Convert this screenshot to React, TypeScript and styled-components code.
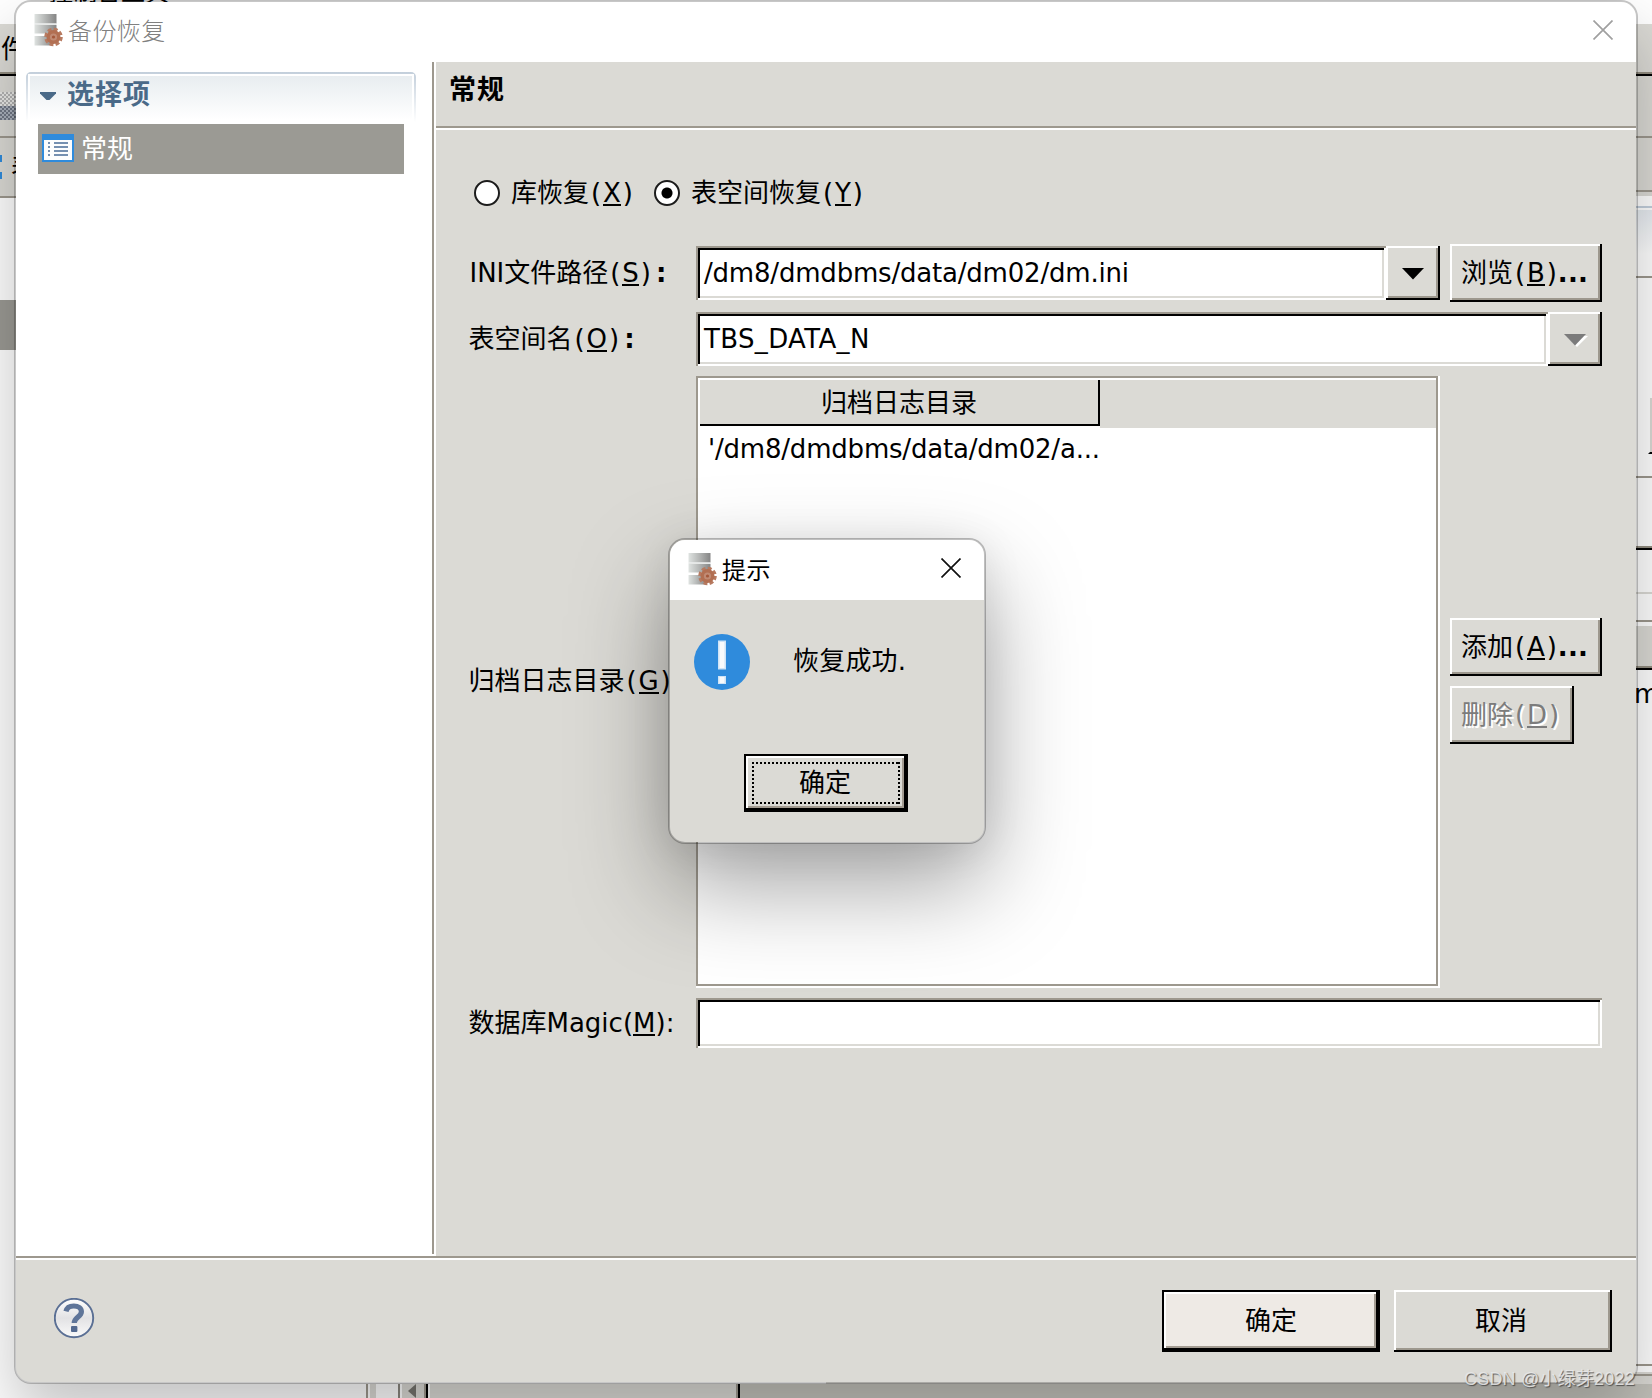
import React from 'react';
import styled, { createGlobalStyle } from 'styled-components';

interface Band {
    height: number;
    color: string;
}

/* 뒤쪽 창의 왼쪽 / 오른쪽 줄무늬 영역 */
const LeftBands: Band[] = [
    { height: 2, color: '#928d80' },
    { height: 2, color: '#000000' },
    { height: 60, color: '#dbdad5' },
    { height: 2, color: '#9d988e' },
    { height: 58, color: '#dbdad5' },
    { height: 2, color: '#9d988e' },
    { height: 102, color: '#ffffff' },
    { height: 50, color: '#9b9a94' },
    { height: 1034, color: '#ffffff' },
];

const RightBands: Band[] = [
    { height: 2, color: '#928d80' },
    { height: 2, color: '#000000' },
    { height: 60, color: '#dbdad5' },
    { height: 2, color: '#9d988e' },
    { height: 52, color: '#dbdad5' },
    { height: 2, color: '#9d988e' },
    { height: 4, color: '#dbdad5' },
    { height: 10, color: '#ffffff' },
    { height: 2, color: '#c3cfdc' },
    { height: 2, color: '#ffffff' },
    { height: 44, color: 'linear-gradient(#e6ebf0, #ffffff)' },
    { height: 22, color: '#ffffff' },
    { height: 2, color: '#9d988e' },
    { height: 198, color: '#ffffff' },
    { height: 2, color: '#9d988e' },
    { height: 68, color: '#ffffff' },
    { height: 2, color: '#928d80' },
    { height: 2, color: '#000000' },
    { height: 42, color: '#ffffff' },
    { height: 2, color: '#dbdad5' },
    { height: 26, color: '#ffffff' },
    { height: 2, color: '#9d988e' },
    { height: 4, color: '#ffffff' },
    { height: 40, color: '#dbdad5' },
    { height: 2, color: '#928d80' },
    { height: 2, color: '#000000' },
    { height: 694, color: '#ffffff' },
    { height: 2, color: '#9d988e' },
    { height: 6, color: '#ffffff' },
    { height: 2, color: '#dbdad5' },
    { height: 2, color: '#9d988e' },
    { height: 8, color: '#dbdad5' },
];

const BottomCells = [
    { width: 366, color: '#ffffff' },
    { width: 2, color: '#9d988e' },
    { width: 2, color: '#ffffff' },
    { width: 6, color: '#dbdad5' },
    { width: 22, color: '#ffffff' },
    { width: 2, color: '#8a877f' },
    { width: 2, color: '#ffffff' },
    { width: 22, color: '#dbdad5' },
    { width: 2, color: '#9d988e' },
    { width: 2, color: '#000000' },
    { width: 2, color: '#ffffff' },
    { width: 306, color: '#dbdad5' },
    { width: 2, color: '#9d988e' },
    { width: 2, color: '#000000' },
    { width: 912, color: '#c2c1ba' },
];

const ServerIcon = () => (
    <svg width="30" height="34" viewBox="0 0 30 34">
        <defs>
            <linearGradient id="disk" x1="0" y1="0" x2="1" y2="0">
                <stop offset="0" stopColor="#dfe3e1" />
                <stop offset="0.5" stopColor="#b3b5b4" />
                <stop offset="1" stopColor="#858585" />
            </linearGradient>
        </defs>
        <rect x="0.5" y="1" width="22" height="9.5" fill="url(#disk)" />
        <rect x="0.5" y="10.5" width="22" height="1.5" fill="#e6e8e7" />
        <rect x="0.5" y="12" width="22" height="8.5" fill="url(#disk)" />
        <rect x="0.5" y="23" width="18" height="9.5" fill="url(#disk)" />
        <circle
            cx="19.5"
            cy="24"
            r="7.6"
            fill="none"
            stroke="#b77a60"
            strokeWidth="3.4"
            strokeDasharray="3.8 2.17"
        />
        <circle cx="19.5" cy="24" r="7" fill="#b26f52" />
        <circle cx="19.5" cy="24" r="3.6" fill="#c08b74" />
        <circle cx="19.5" cy="24" r="1.6" fill="#a4583a" />
    </svg>
);

const CloseIcon = ({ color }: { color: string }) => (
    <svg width="20" height="20" viewBox="0 0 20 20">
        <path d="M0.5 0.5L19.5 19.5M19.5 0.5L0.5 19.5" stroke={color} strokeWidth="1.7" />
    </svg>
);

const ListIcon = () => (
    <svg width="32" height="28" viewBox="0 0 32 28" shapeRendering="crispEdges">
        <rect width="32" height="28" fill="#2f8bdc" />
        <rect x="2" y="6" width="28" height="20" fill="#fdfdfd" />
        <path
            d="M6 9h2M6 13h2M6 17h2M6 21h2M12 9h14M12 13h14M12 17h14M12 21h14"
            stroke="#7690b0"
            strokeWidth="2"
        />
    </svg>
);

const InfoIcon = () => (
    <svg width="56" height="56" viewBox="0 0 56 56">
        <circle cx="28" cy="28" r="28" fill="#2f8bdc" />
        <rect x="24" y="6.5" width="8" height="29" fill="#cfe3f6" />
        <rect x="25.5" y="8" width="5" height="26" fill="#f8fafc" />
        <rect x="24" y="42" width="8" height="8" fill="#cfe3f6" />
        <rect x="25.5" y="43" width="5" height="6" fill="#f8fafc" />
    </svg>
);

const HelpIcon = () => (
    <svg width="42" height="42" viewBox="0 0 42 42">
        <defs>
            <linearGradient id="help" x1="0" y1="0" x2="0" y2="1">
                <stop offset="0" stopColor="#ffffff" />
                <stop offset="0.5" stopColor="#e2e2e4" />
                <stop offset="1" stopColor="#fafafa" />
            </linearGradient>
        </defs>
        <circle cx="20" cy="20" r="19.2" fill="url(#help)" stroke="#5a6f94" strokeWidth="1.9" />
        <path
            d="M12 13.4C12.8 9.6 15.8 8 19.8 8c4.6 0 7.6 2.2 7.6 5.7 0 5.1-7.2 5.7-7.2 11.4"
            fill="none"
            stroke="#5f7599"
            strokeWidth="5.2"
        />
        <rect x="17" y="28" width="6.4" height="6" rx="1" fill="#53698f" />
    </svg>
);

const Arrow = ({ disabled }: { disabled?: boolean }) => (
    <svg width="26" height="16" viewBox="0 0 26 16">
        {disabled && <path d="M4 5h22L15 16z" fill="#ffffff" />}
        <path d="M2 3h22L13 14.5z" fill={disabled ? '#7b7b7b' : '#000000'} />
    </svg>
);

/* 단축키 표시 (X) */
const Key = ({ char }: { char: string }) => (
    <>
        <Half>(</Half>
        <Mnemonic>{char}</Mnemonic>
        <Half>)</Half>
    </>
);

const App = () => {
    return (
        <>
            <GlobalStyle />
            <Desktop>
                <BackTop>
                    <BackTitle>控制台工具</BackTitle>
                </BackTop>
                <BackMenu>件</BackMenu>
                <BackColumns>
                    <BackColumn>
                        {LeftBands.map((band, i) => (
                            <BandBox key={i} $height={band.height} $color={band.color} />
                        ))}
                    </BackColumn>
                    <BackColumn>
                        {RightBands.map((band, i) => (
                            <BandBox key={i} $height={band.height} $color={band.color} />
                        ))}
                    </BackColumn>
                </BackColumns>
                <BackBottom>
                    {BottomCells.map((cell, i) => (
                        <BottomCell key={i} $width={cell.width} $color={cell.color}>
                            {i === 7 && (
                                <svg width="10" height="14" viewBox="0 0 10 14">
                                    <path d="M8 0v14L0 7z" fill="#77756f" />
                                </svg>
                            )}
                        </BottomCell>
                    ))}
                </BackBottom>
                <ToolImage />
                <ToolDots />
                <ToolText>表</ToolText>
                <SideButton />
                <SideText>m</SideText>

                <Dialog>
                    <TitleBar>
                        <ServerIcon />
                        <TitleText $muted>备份恢复</TitleText>
                        <CloseIcon color="#a0a0a0" />
                    </TitleBar>
                    <Body>
                        <Sidebar>
                            <SectionHeader>
                                <svg width="16" height="9" viewBox="0 0 16 9">
                                    <path d="M0 0h16v1.6L9.5 8h-3L0 1.6z" fill="#4a6a88" />
                                </svg>
                                <SectionTitle>选择项</SectionTitle>
                            </SectionHeader>
                            <SideItem>
                                <ListIcon />
                                <SideText2>常规</SideText2>
                            </SideItem>
                        </Sidebar>
                        <Pane>
                            <PaneHeader>常规</PaneHeader>
                            <Form>
                                <RadioRow>
                                    <Radio />
                                    <RadioLabel $width={143}>
                                        库恢复
                                        <Key char="X" />
                                    </RadioLabel>
                                    <Radio $checked />
                                    <RadioLabel>
                                        表空间恢复
                                        <Key char="Y" />
                                    </RadioLabel>
                                </RadioRow>
                                <Row $height={58}>
                                    <Label $indent={1}>
                                        INI文件路径
                                        <Key char="S" />
                                        <Colon>:</Colon>
                                    </Label>
                                    <Combo>
                                        <Field $spacing={-0.2}>/dm8/dmdbms/data/dm02/dm.ini</Field>
                                        <DropButton>
                                            <Arrow />
                                        </DropButton>
                                    </Combo>
                                    <Button $width={152}>
                                        浏览
                                        <Key char="B" />
                                        <Dots>...</Dots>
                                    </Button>
                                </Row>
                                <Row $height={54}>
                                    <Label>
                                        表空间名
                                        <Key char="O" />
                                        <Colon>:</Colon>
                                    </Label>
                                    <Combo>
                                        <Field $spacing={0.35}>TBS_DATA_N</Field>
                                        <DropButton>
                                            <Arrow disabled />
                                        </DropButton>
                                    </Combo>
                                </Row>
                                <Row $height={612}>
                                    <Label $raise={2}>
                                        归档日志目录
                                        <Key char="G" />
                                    </Label>
                                    <Table>
                                        <TableHeader>
                                            <HeaderCell>归档日志目录</HeaderCell>
                                        </TableHeader>
                                        <TableRow>'/dm8/dmdbms/data/dm02/a...</TableRow>
                                    </Table>
                                    <ButtonColumn>
                                        <Button $width={152}>
                                            添加
                                            <Key char="A" />
                                            <Dots>...</Dots>
                                        </Button>
                                        <Button $width={124} $disabled>
                                            删除
                                            <Key char="D" />
                                        </Button>
                                    </ButtonColumn>
                                </Row>
                                <Row $height={50}>
                                    <Label>
                                        数据库Magic(<Mnemonic>M</Mnemonic>):
                                    </Label>
                                    <Field />
                                </Row>
                            </Form>
                        </Pane>
                    </Body>
                    <Footer>
                        <HelpIcon />
                        <FooterButtons>
                            <DefaultButton $width={218} $height={62} $color="#eeeae5">
                                确定
                            </DefaultButton>
                            <CancelButton $width={218}>取消</CancelButton>
                        </FooterButtons>
                    </Footer>
                </Dialog>

                <Popup>
                    <PopupTitleBar>
                        <ServerIcon />
                        <TitleText>提示</TitleText>
                        <CloseIcon color="#111111" />
                    </PopupTitleBar>
                    <PopupMessage>
                        <InfoIcon />
                        <MessageText>恢复成功.</MessageText>
                    </PopupMessage>
                    <PopupButtons>
                        <DefaultButton $width={164} $height={58} $color="#dbdad5">
                            <FocusRing>确定</FocusRing>
                        </DefaultButton>
                    </PopupButtons>
                </Popup>

                <Watermark>CSDN @小绿芽2022</Watermark>
            </Desktop>
        </>
    );
};

export default App;

const GlobalStyle = createGlobalStyle`
    * {
        box-sizing: border-box;
    }
    body {
        margin: 0;
        overflow: hidden;
    }
    svg {
        display: block;
        flex: none;
    }
`;

/* 바탕 화면 */
const Desktop = styled.div`
    position: relative;
    width: 1652px;
    height: 1398px;
    overflow: hidden;
    background: #ffffff;
    color: #000000;
    font-family: 'DejaVu Sans', 'Noto Sans CJK SC', sans-serif;
    font-size: 26px;
    line-height: 30px;
    white-space: nowrap;
`;

const BackTop = styled.div`
    height: 24px;
    padding-left: 49px;
    overflow: hidden;
`;

const BackTitle = styled.div`
    margin-top: -24px;
    font-family: 'Noto Sans CJK SC', sans-serif;
    font-size: 24px;
    line-height: 30px;
`;

const BackMenu = styled.div`
    height: 48px;
    padding: 10px 0 0 1px;
    background: #dbdad5;
`;

const BackColumns = styled.div`
    display: grid;
    grid-template-columns: 1fr 1fr;
    height: 1312px;
`;

const BackColumn = styled.div`
    display: flex;
    flex-direction: column;
    overflow: hidden;
`;

const BandBox = styled.div<{ $height: number; $color: string }>`
    flex: none;
    height: ${({ $height }) => $height}px;
    background: ${({ $color }) => $color};
`;

const BackBottom = styled.div`
    display: flex;
    height: 14px;
`;

const BottomCell = styled.div<{ $width: number; $color: string }>`
    display: flex;
    align-items: center;
    justify-content: center;
    flex: none;
    width: ${({ $width }) => $width}px;
    background: ${({ $color }) => $color};
`;

/* 대화상자에 가려진 툴바 조각 */
const ToolImage = styled.div`
    position: absolute;
    left: 0;
    top: 92px;
    width: 16px;
    height: 28px;
    background:
        linear-gradient(rgba(240, 240, 240, 0.4) 50%, rgba(60, 80, 120, 0.35) 50%),
        repeating-conic-gradient(#8b8b8b 0 25%, #e4e4e0 0 50%) 0 0 / 4px 4px;
`;

const ToolDots = styled.div`
    position: absolute;
    left: 0;
    top: 155px;
    width: 2px;
    height: 24px;
    background: linear-gradient(#2f8bdc 7px, transparent 7px 17px, #2f8bdc 17px);
`;

const ToolText = styled.div`
    position: absolute;
    left: 11px;
    top: 153px;
    line-height: 30px;
`;

const SideButton = styled.div`
    position: absolute;
    left: 1648px;
    top: 398px;
    width: 4px;
    height: 56px;
    border-left: 2px solid #ffffff;
    border-bottom: 2px solid #000000;
    background: #dbdad5;
`;

const SideText = styled.div`
    position: absolute;
    left: 1634px;
    top: 679px;
    line-height: 30px;
`;

const Dialog = styled.div`
    position: absolute;
    left: 14px;
    top: 0;
    width: 1624px;
    height: 1384px;
    display: flex;
    flex-direction: column;
    overflow: hidden;
    border: 2px solid rgba(0, 0, 0, 0.22);
    border-radius: 17px;
    background: #dbdad5;
    background-clip: padding-box;
    box-shadow: 0 32px 64px rgba(0, 0, 0, 0.24);
`;

const TitleBar = styled.div`
    display: flex;
    align-items: center;
    flex: none;
    height: 60px;
    padding: 0 23px 4px 18px;
    background: #ffffff;
`;

const TitleText = styled.div<{ $muted?: boolean }>`
    flex: 1;
    margin-left: 4px;
    font-family: 'Noto Sans CJK SC', sans-serif;
    font-size: 24px;
    font-weight: ${({ $muted }) => ($muted ? 300 : 400)};
    letter-spacing: 0.4px;
    color: ${({ $muted }) => ($muted ? '#808080' : '#000000')};
`;

const Body = styled.div`
    display: flex;
    flex: none;
    height: 1194px;
    background: #ffffff;
`;

const Sidebar = styled.div`
    flex: none;
    width: 420px;
    height: 1192px;
    padding: 10px 20px 0 10px;
    background: #ffffff;
    box-shadow: inset -2px 0 #ffffff, inset -4px 0 #9d988e;
`;

const SectionHeader = styled.div`
    display: flex;
    align-items: center;
    height: 50px;
    padding: 0 0 2px 14px;
    border-radius: 5px 5px 0 0;
    background:
        linear-gradient(#e8edf0, #ffffff) 4px 4px / calc(100% - 8px) 44px no-repeat,
        linear-gradient(#ffffff, #ffffff) 2px 2px / calc(100% - 4px) 48px no-repeat,
        linear-gradient(#c3cfdb, #ffffff);
`;

const SectionTitle = styled.div`
    margin: -2px 0 0 11px;
    font-size: 27px;
    font-weight: bold;
    letter-spacing: 1px;
    color: #4a6a88;
`;

const SideItem = styled.div`
    display: flex;
    align-items: center;
    width: 366px;
    height: 50px;
    margin: 2px 0 0 12px;
    padding: 0 0 2px 4px;
    gap: 7px;
    background: #9b9a94;
    color: #ffffff;
`;

const SideText2 = styled.span`
    padding-top: 2px;
`;

const Pane = styled.div`
    flex: 1;
    background: #dbdad5;
`;

const PaneHeader = styled.div`
    height: 68px;
    padding: 13px 0 0 13px;
    border-bottom: 2px solid #ffffff;
    box-shadow: inset 0 -2px #9d988e;
    font-size: 27px;
    font-weight: bold;
    letter-spacing: 1px;
`;

const Form = styled.div`
    display: flex;
    flex-direction: column;
    gap: 10px;
    padding: 50px 34px 0 32px;
`;

const RadioRow = styled.div`
    display: flex;
    align-items: center;
    height: 26px;
    margin-bottom: 28px;
    padding-left: 6px;
`;

const Radio = styled.span<{ $checked?: boolean }>`
    flex: none;
    width: 26px;
    height: 26px;
    border: 2px solid #1c1c1c;
    border-radius: 50%;
    background: ${({ $checked }) =>
        $checked ? 'radial-gradient(circle, #000000 5px, #ffffff 6px)' : '#ffffff'};
`;

const RadioLabel = styled.span<{ $width?: number }>`
    width: ${({ $width }) => ($width ? `${$width}px` : 'auto')};
    margin-left: 11px;
`;

const Row = styled.div<{ $height: number }>`
    display: flex;
    align-items: center;
    height: ${({ $height }) => $height}px;
    gap: 10px;
`;

const Label = styled.div<{ $indent?: number; $raise?: number }>`
    flex: none;
    width: 218px;
    padding-left: ${({ $indent = 0 }) => $indent + 0.5}px;
    padding-bottom: ${({ $raise = 0 }) => $raise}px;
`;

const Half = styled.span`
    display: inline-block;
    width: 14px;
    text-align: center;
`;

const Colon = styled(Half)`
    width: 17px;
    font-weight: bold;
`;

const Mnemonic = styled.span`
    display: inline-block;
    height: 26px;
    line-height: 26px;
    border-bottom: 2px solid currentColor;
`;

const Dots = styled.span`
    margin-left: -1px;
    font-weight: bold;
    letter-spacing: 0.2px;
`;

const Combo = styled.div`
    display: flex;
    flex: 1;
    height: 54px;
`;

/* 움푹 들어간 입력창 */
const Field = styled.div<{ $spacing?: number }>`
    flex: 1;
    height: 100%;
    padding: 12px 8px 8px;
    background: #ffffff;
    letter-spacing: ${({ $spacing = 0 }) => $spacing}px;
    box-shadow:
        inset 2px 2px #9d988e,
        inset -2px -2px #ffffff,
        inset 4px 4px #000000,
        inset -4px -4px #dbdad5;
`;

/* 튀어나온 버튼 */
const Button = styled.div<{ $width: number; $disabled?: boolean }>`
    display: flex;
    align-items: center;
    flex: none;
    width: ${({ $width }) => $width}px;
    height: 58px;
    padding: 0 0 0 11px;
    background: #dbdad5;
    color: ${({ $disabled }) => ($disabled ? '#7c7c7c' : '#000000')};
    text-shadow: ${({ $disabled }) => ($disabled ? '2px 2px #ffffff' : 'none')};
    box-shadow:
        inset -2px -2px #000000,
        inset 2px 2px #ffffff,
        inset -4px -4px #9d988e;
`;

const DropButton = styled(Button).attrs({ $width: 54 })`
    justify-content: center;
    height: 54px;
    padding: 0;
`;

const CancelButton = styled(Button)`
    justify-content: center;
    height: 62px;
    padding: 0 4px 0 0;
`;

const DefaultButton = styled.div<{ $width: number; $height: number; $color: string }>`
    display: flex;
    align-items: center;
    justify-content: center;
    width: ${({ $width }) => $width}px;
    height: ${({ $height }) => $height}px;
    padding: 0 4px 0 4px;
    background: ${({ $color }) => $color};
    box-shadow:
        inset 2px 2px #000000,
        inset -4px -4px #000000,
        inset 4px 4px #ffffff,
        inset -6px -6px #a39c92;
`;

const FocusRing = styled.span`
    display: flex;
    align-items: center;
    justify-content: center;
    width: 148px;
    height: 42px;
    padding-right: 2px;
    background:
        repeating-linear-gradient(90deg, #000 0 2px, transparent 2px 4px) 0 0 / 100% 2px no-repeat,
        repeating-linear-gradient(90deg, #000 0 2px, transparent 2px 4px) 0 100% / 100% 2px no-repeat,
        repeating-linear-gradient(#000 0 2px, transparent 2px 4px) 0 0 / 2px 100% no-repeat,
        repeating-linear-gradient(#000 0 2px, transparent 2px 4px) 100% 0 / 2px 100% no-repeat;
`;

const ButtonColumn = styled.div`
    display: flex;
    flex-direction: column;
    width: 152px;
    gap: 10px;
    padding-bottom: 2px;
`;

const Table = styled.div`
    flex: 1;
    height: 100%;
    padding: 2px 4px 4px 2px;
    background: #ffffff;
    box-shadow:
        inset -2px -2px #ffffff,
        inset 2px 2px #9d988e,
        inset -4px -4px #9d988e;
`;

const TableHeader = styled.div`
    height: 50px;
    background: #dbdad5;
    box-shadow: inset 0 2px #ffffff;
`;

const HeaderCell = styled.div`
    width: 402px;
    height: 50px;
    padding-top: 10px;
    border-bottom: 2px solid #ffffff;
    text-align: center;
    box-shadow: inset 2px 2px #ffffff, inset -2px -2px #000000;
`;

const TableRow = styled.div`
    padding: 6px 10px;
    letter-spacing: -0.2px;
`;

const Footer = styled.div`
    display: flex;
    flex: 1;
    align-items: flex-start;
    justify-content: space-between;
    padding: 30px 24px 0 38px;
    border-top: 2px solid #9d988e;
    box-shadow: inset 0 2px #ffffff;

    & > svg {
        margin-top: 10px;
    }
`;

const FooterButtons = styled.div`
    display: flex;
    gap: 14px;
    padding-top: 2px;
`;

/* 알림 팝업 */
const Popup = styled.div`
    position: absolute;
    left: 668px;
    top: 538px;
    width: 318px;
    height: 306px;
    overflow: hidden;
    border: 2px solid rgba(0, 0, 0, 0.25);
    border-radius: 17px;
    background: #dbdad5;
    background-clip: padding-box;
    box-shadow: 0 42px 96px rgba(0, 0, 0, 0.36), 0 4px 40px rgba(0, 0, 0, 0.08);
`;

const PopupTitleBar = styled(TitleBar)`
    padding: 0 23px 2px 18px;

    & > svg:last-child {
        margin-top: -2px;
    }
`;

const PopupMessage = styled.div`
    display: flex;
    align-items: center;
    gap: 43px;
    height: 56px;
    margin: 34px 0 0 24px;
`;

const MessageText = styled.span`
    padding-bottom: 2px;
    letter-spacing: 0.2px;
`;

const PopupButtons = styled.div`
    display: flex;
    margin: 64px 0 0 74px;
`;

const Watermark = styled.div`
    position: absolute;
    left: 1464px;
    top: 1366px;
    font-family: 'Liberation Sans', 'Noto Sans CJK SC', sans-serif;
    font-size: 18px;
    line-height: 26px;
    letter-spacing: 0.2px;
    color: rgba(235, 235, 235, 0.85);
    text-shadow: 1px 1px 1px rgba(60, 60, 60, 0.8);
`;
